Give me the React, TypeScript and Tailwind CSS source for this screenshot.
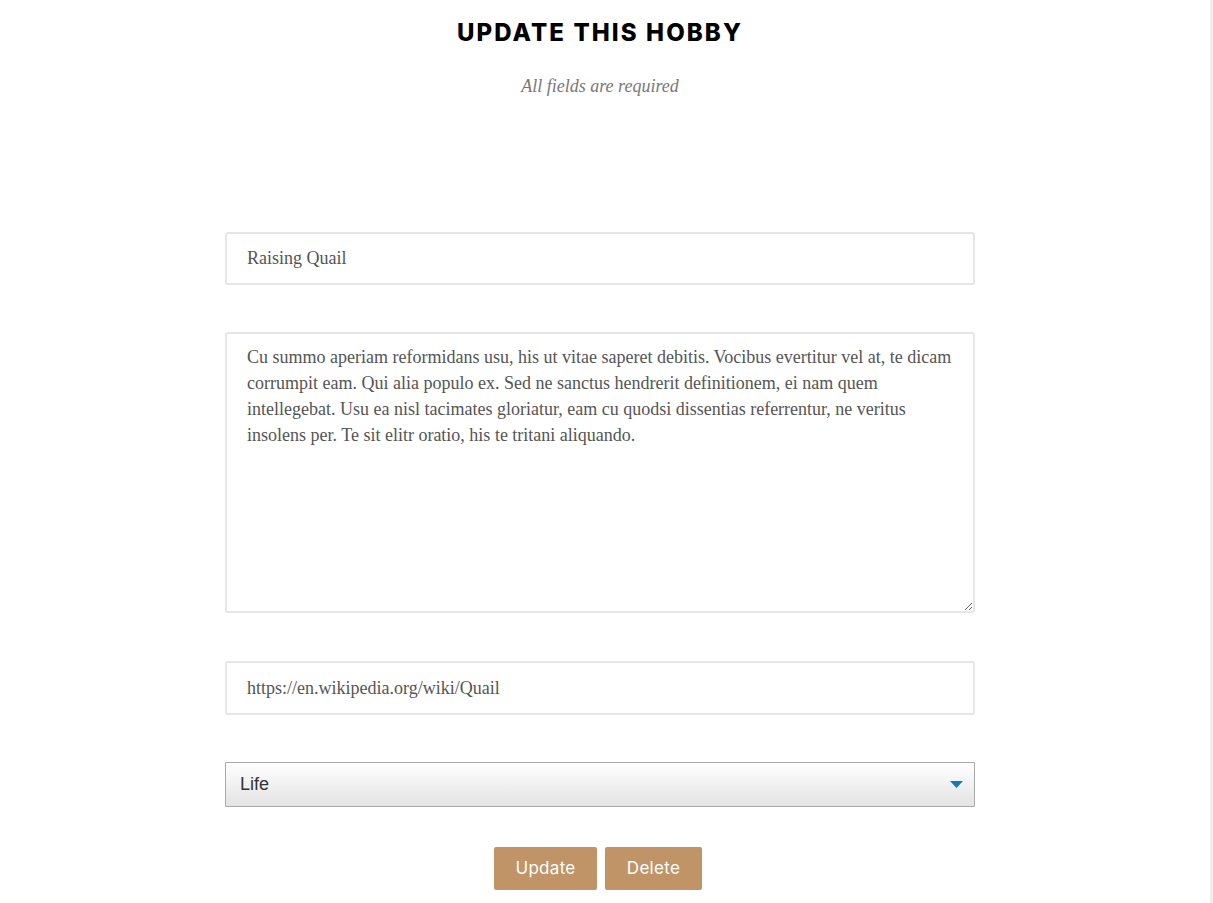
import { useState } from "react";

export default function App() {
  const [title, setTitle] = useState("Raising Quail");
  const [desc, setDesc] = useState(
    "Cu summo aperiam reformidans usu, his ut vitae saperet debitis. Vocibus evertitur vel at, te dicam corrumpit eam. Qui alia populo ex. Sed ne sanctus hendrerit definitionem, ei nam quem intellegebat. Usu ea nisl tacimates gloriatur, eam cu quodsi dissentias referrentur, ne veritus insolens per. Te sit elitr oratio, his te tritani aliquando."
  );
  const [url, setUrl] = useState("https://en.wikipedia.org/wiki/Quail");
  const [category, setCategory] = useState("Life");

  const serif = "font-['Liberation_Serif',serif]";

  return (
    <div className="flex min-h-screen bg-white">
      <main className="w-[1200px] shrink-0">
        {/* Heading */}
        <div className="flex flex-col items-center pt-[19px]">
          <h1 className="font-['Inter',sans-serif] text-[24px] font-extrabold leading-[28px] tracking-[2.1px] text-black">
            UPDATE THIS HOBBY
          </h1>
          <p className={`${serif} mt-[28px] text-[18px] italic leading-[22px] text-[#777]`}>
            All fields are required
          </p>
        </div>

        {/* Form */}
        <form className="mx-auto mt-[135px] flex w-[750px] flex-col">
          <input
            value={title}
            onChange={(e) => setTitle(e.target.value)}
            className={`${serif} h-[53px] rounded-[3px] border-2 border-[#e6e6e6] px-[20px] text-[18px] text-[#555] outline-none`}
          />
          <textarea
            value={desc}
            onChange={(e) => setDesc(e.target.value)}
            className={`${serif} mt-[47px] h-[281px] rounded-[3px] border-2 border-[#e6e6e6] px-[20px] pt-[10px] text-[18px] leading-[26px] text-[#555] outline-none`}
          />
          <input
            value={url}
            onChange={(e) => setUrl(e.target.value)}
            className={`${serif} mt-[48px] h-[54px] rounded-[3px] border-2 border-[#e6e6e6] px-[20px] text-[18px] text-[#555] outline-none`}
          />
          <div className="relative mt-[47px]">
            <select
              value={category}
              onChange={(e) => setCategory(e.target.value)}
              className="h-[45px] w-full appearance-none rounded-[1px] border border-[#a9a9a9] bg-gradient-to-b from-white to-[#e3e3e3] pl-[14px] font-['Liberation_Sans',sans-serif] text-[18px] text-[#333] outline-none"
            >
              <option>Life</option>
              <option>Sport</option>
              <option>Art</option>
            </select>
            <svg
              className="pointer-events-none absolute right-[12px] top-[19px]"
              width="13"
              height="7"
              viewBox="0 0 13 7"
            >
              <path d="M0 0h13L6.5 7z" fill="#0e7bbd" />
            </svg>
          </div>

          <div className="mt-[40px] flex justify-center gap-[8px] pr-[4px]">
            <button
              type="button"
              className="h-[43px] w-[103px] rounded-[2px] bg-[#c09466] font-['Inter',sans-serif] text-[17px] tracking-[0.3px] text-white"
            >
              Update
            </button>
            <button
              type="button"
              className="h-[43px] w-[97px] rounded-[2px] bg-[#c09466] font-['Inter',sans-serif] text-[17px] tracking-[0.3px] text-white"
            >
              Delete
            </button>
          </div>
        </form>
      </main>
      <div className="w-[10px] shrink-0" />
      <div className="w-[3px] shrink-0 bg-[#eeeeee]" />
    </div>
  );
}
